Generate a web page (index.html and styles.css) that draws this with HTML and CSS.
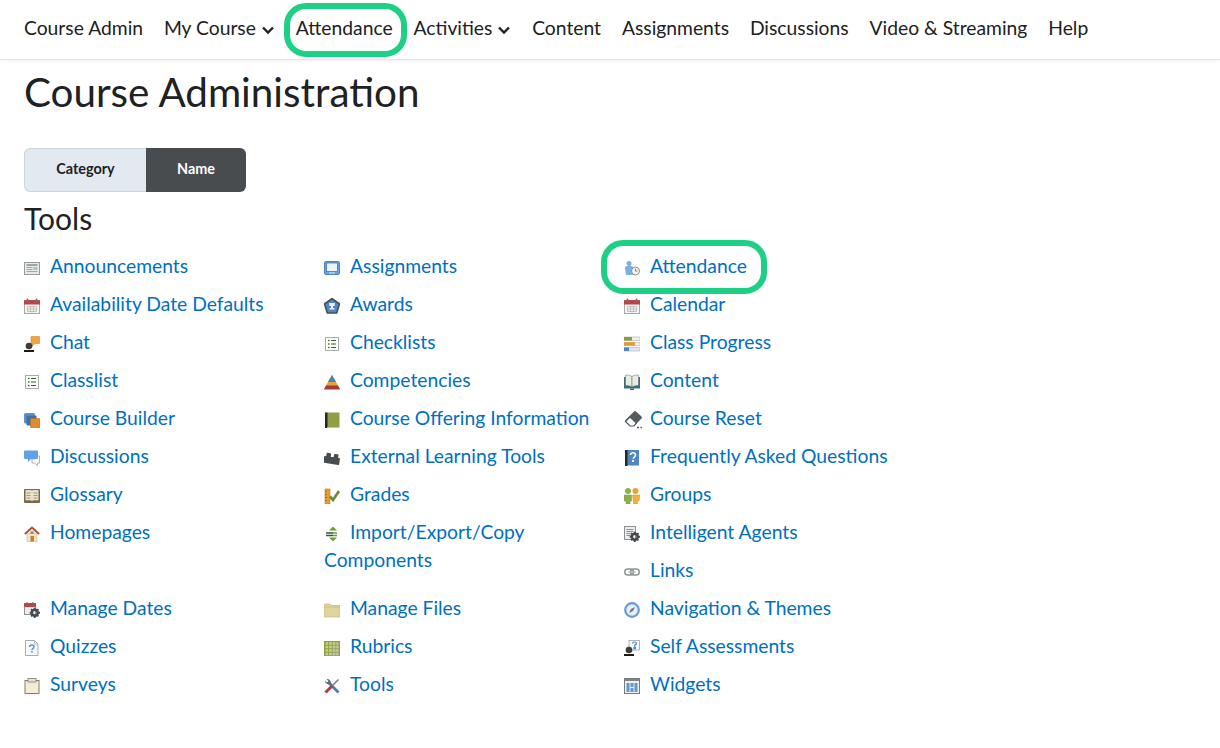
FILE: index.html
```html
<!DOCTYPE html>
<html lang="en">
<head>
  <meta charset="UTF-8">
  <title>Course Administration</title>
  <link rel="stylesheet" href="styles.css">
</head>
<body>
  <svg class="defs" width="0" height="0">
    <symbol id="i-list" viewBox="0 0 16 16"><rect x="1.500" y="1.500" width="13" height="13" fill="#fff" stroke="#a9adaa"/><path d="M4 4.500h1.500M4 8h1.500M4 11.500h1.500" stroke="#3f7a10" stroke-width="1.600"/><path d="M7 4.500h5M7 8h5M7 11.500h5" stroke="#3d5a30" stroke-width="1.100"/></symbol>
    <symbol id="i-cal" viewBox="0 0 16 16"><rect x=".5" y="2.500" width="15" height="13" fill="#f4f4f2" stroke="#a5a8a8"/><rect y="2" width="16" height="4.500" rx="1" fill="#b8454a"/><path d="M3.500 .5v3M12.500 .5v3" stroke="#777" stroke-width="1.600"/><path d="M3.500 8.500h9v5h-9zM6.500 8.500v5M9.500 8.500v5M3.500 11h9" fill="none" stroke="#b5b5b5" stroke-width=".8"/></symbol>
    <symbol id="i-gear" viewBox="0 0 10 10"><circle cx="5" cy="5" r="2.800" fill="none" stroke="#444b50" stroke-width="2.400"/><path d="M5 0v2M5 8v2M0 5h2M8 5h2M1.500 1.500l1.400 1.400M7.100 7.100l1.400 1.400M8.500 1.500L7.100 2.900M2.900 7.100L1.500 8.500" stroke="#444b50" stroke-width="1.800"/></symbol>
  </svg>

  <nav class="topnav">
    <a href="#">Course Admin</a>
    <a href="#">My Course <svg class="chevron" viewBox="0 0 14 9"><path d="M2 1.500l5 5 5-5" fill="none" stroke="#202122" stroke-width="2.400"/></svg></a>
    <a href="#" class="nav-marked">Attendance</a>
    <a href="#">Activities <svg class="chevron" viewBox="0 0 14 9"><path d="M2 1.500l5 5 5-5" fill="none" stroke="#202122" stroke-width="2.400"/></svg></a>
    <a href="#">Content</a>
    <a href="#">Assignments</a>
    <a href="#">Discussions</a>
    <a href="#">Video &amp; Streaming</a>
    <a href="#">Help</a>
  </nav>

  <main class="page">
    <h1>Course Administration</h1>

    <div class="toggle">
      <button class="toggle-btn">Category</button>
      <button class="toggle-btn active">Name</button>
    </div>

    <h2>Tools</h2>

    <ul class="tools">
      <li><a href="#"><svg class="icon" viewBox="0 0 16 16"><rect x=".5" y="2.500" width="15" height="12" fill="#e8eae8" stroke="#969c99"/><path d="M2.500 5h11" stroke="#868e8b" stroke-width="1.500"/><path d="M2.500 7.500h6M2.500 9.500h6M2.500 11.500h11" stroke="#a3a9a6"/><rect x="9.500" y="7" width="4" height="3" fill="#a5c2d6"/></svg>Announcements</a></li>
      <li><a href="#"><svg class="icon" viewBox="0 0 16 16"><rect x=".5" y="1.500" width="15" height="13" rx="1.500" fill="#6ba3e0" stroke="#4d85c0"/><rect x="2.500" y="3" width="11" height="8.500" fill="#eef2f5" stroke="#3f6c99" stroke-width=".7"/><path d="M5 13h6" stroke="#dbe7f2"/></svg>Assignments</a></li>
      <li class="tool-marked"><a href="#"><svg class="icon" viewBox="0 0 16 16"><circle cx="5" cy="3.500" r="2.500" fill="#7aaee4"/><path d="M1 8q0-2 2-2h4q2 0 2.500 2l-.5 7H2z" fill="#7aaee4"/><circle cx="11.500" cy="11" r="4" fill="#f2f3f2" stroke="#8b918f"/><path d="M11.500 8.800V11h2" fill="none" stroke="#666" stroke-width=".8"/></svg>Attendance</a></li>

      <li><a href="#"><svg class="icon"><use href="#i-cal"/></svg>Availability Date Defaults</a></li>
      <li><a href="#"><svg class="icon" viewBox="0 0 16 16"><path d="M8 .5l7.500 5.500-2.800 9H3.300L.5 6z" fill="#4f86c6" stroke="#4a4f52" stroke-width="1.600" stroke-linejoin="round"/><path d="M5 5h6l-.5 3H9v2h1.500v1.500h-5V10H7V8H5.500z" fill="#e8eef2"/></svg>Awards</a></li>
      <li><a href="#"><svg class="icon"><use href="#i-cal"/></svg>Calendar</a></li>

      <li><a href="#"><svg class="icon" viewBox="0 0 16 16"><path d="M7 .5h8.500v7H11L8 10.500l.5-3H7z" fill="#f0a541" stroke="#d68a2c" stroke-width=".6"/><circle cx="5" cy="10" r="3.300" fill="#3c3c3c"/><path d="M0 15h10" stroke="#000" stroke-width="1.800"/></svg>Chat</a></li>
      <li><a href="#"><svg class="icon"><use href="#i-list"/></svg>Checklists</a></li>
      <li><a href="#"><svg class="icon" viewBox="0 0 16 16"><rect y="1" width="16" height="3.500" fill="#f0f0ee" stroke="#b0b4b2" stroke-width=".6"/><rect y="1" width="8" height="3.500" fill="#7f9c3f"/><rect y="6.200" width="16" height="3.500" fill="#f0f0ee" stroke="#b0b4b2" stroke-width=".6"/><rect y="6.200" width="11" height="3.500" fill="#e59a33"/><rect y="11.500" width="16" height="3.500" fill="#dfe6ee" stroke="#b0b4b2" stroke-width=".6"/><rect y="11.500" width="5" height="3.500" fill="#4b86c6"/></svg>Class Progress</a></li>

      <li><a href="#"><svg class="icon"><use href="#i-list"/></svg>Classlist</a></li>
      <li><a href="#"><svg class="icon" viewBox="0 0 16 16"><path d="M8 1L0 15h16z" fill="#e0a83a"/><path d="M8 1L4 8h8z" fill="#4b82b8"/><path d="M2 11.500L0 15.500h16l-2-4z" fill="#a83a3a"/></svg>Competencies</a></li>
      <li><a href="#"><svg class="icon" viewBox="0 0 16 16"><rect y="3" width="16" height="11.500" fill="#3c6e78"/><path d="M6 14.500h4v1.500H6z" fill="#3c6e78"/><path d="M1.500 1c3 0 5 .5 6.500 1.500V13c-1.500-1-3.500-1.500-6.500-1.500z" fill="#e8ecdf" stroke="#596b6e" stroke-width=".5"/><path d="M14.500 1c-3 0-5 .5-6.500 1.500V13c1.500-1 3.500-1.500 6.500-1.500z" fill="#e8ecdf" stroke="#596b6e" stroke-width=".5"/></svg>Content</a></li>

      <li><a href="#"><svg class="icon" viewBox="0 0 16 16"><rect y="1" width="11" height="10.500" rx="1.500" fill="#5a93cc"/><rect x="2.500" y="3.500" width="10" height="10" rx="1" fill="#4070a5"/><rect x="6.500" y="6.500" width="9.500" height="9.500" rx="1" fill="#e08a32" stroke="#b86f22" stroke-width=".6"/></svg>Course Builder</a></li>
      <li><a href="#"><svg class="icon" viewBox="0 0 16 16"><rect x="2.500" y=".5" width="13" height="14.500" fill="#909e46"/><rect x="1" y=".5" width="2.500" height="15.500" fill="#262922"/><path d="M3.500 15.500h12" stroke="#c4c69c"/></svg>Course Offering Information</a></li>
      <li><a href="#"><svg class="icon icon-wide" viewBox="0 0 20 19"><path d="M1.500 10L10 1.500Q11 .5 12 1.500L17.500 6.500Q18.500 7.500 17.500 8.500L10 16H6L1.500 12Q.5 11 1.500 10z" fill="#555a5d"/><path d="M1.500 11.500L6 7l6.500 6-2.500 3H6z" fill="#fbfbfb" stroke="#555a5d" stroke-width="1.200"/><path d="M13 17.500h2M16.500 17.500h1.500" stroke="#555a5d" stroke-width="1.500"/></svg>Course Reset</a></li>

      <li><a href="#"><svg class="icon" viewBox="0 0 16 16"><path d="M10.500 6h5v7h-2v2.500l-3-2.500H8V9h2.500z" fill="#fff" stroke="#a7abaa" stroke-width=".9"/><path d="M1 .5h12q1 0 1 1V8q0 1-1 1H7l-3 3V9H1q-1 0-1-1V1.500q0-1 1-1z" fill="#5fa3e6"/></svg>Discussions</a></li>
      <li><a href="#"><svg class="icon" viewBox="0 0 16 16"><g transform="rotate(9 8 8)" fill="#484c50"><rect x="0" y="7" width="16" height="7" rx="1"/><rect x="2" y="3.500" width="4.500" height="5" rx="1"/><rect x="9.500" y="3.500" width="4.500" height="5" rx="1"/></g></svg>External Learning Tools</a></li>
      <li><a href="#"><svg class="icon" viewBox="0 0 16 16"><rect x="1.500" width="13.500" height="15.500" fill="#4c88c4"/><rect x="1" width="2.500" height="16" fill="#24282a"/><path d="M6.500 5q.2-2.200 2.500-2.200 2.600 0 2.500 2.300c0 2-2.200 2-2.200 3.700" fill="none" stroke="#fff" stroke-width="1.600"/><rect x="8" y="10" width="2" height="2" fill="#fff"/></svg>Frequently Asked Questions</a></li>

      <li><a href="#"><svg class="icon" viewBox="0 0 16 16"><rect y="1" width="16" height="14" rx="1" fill="#7d6746"/><path d="M1.500 2h5.500q1 0 1 1v10q-1-.7-2-.7H1.500zM14.500 2H9q-1 0-1 1v10q1-.7 2-.7h4.500z" fill="#e8e2cc"/><path d="M2.500 5h4M2.500 7.500h4M2.500 10h4M9.500 5h4M9.500 7.500h4M9.500 10h4" stroke="#a59a75"/></svg>Glossary</a></li>
      <li><a href="#"><svg class="icon" viewBox="0 0 16 16"><rect x="1" y="1" width="5" height="15" fill="#e69f2e" stroke="#bd7d1e" stroke-width=".6"/><path d="M1 3.500h2M1 6.500h2M1 9.500h2M1 12.500h2" stroke="#8c5f1a" stroke-width=".7"/><path d="M6 8.500l3 3.500 6-9" fill="none" stroke="#67913a" stroke-width="2.800"/></svg>Grades</a></li>
      <li><a href="#"><svg class="icon" viewBox="0 0 16 16"><circle cx="4" cy="3" r="3" fill="#8faf4c"/><circle cx="11.500" cy="3" r="3" fill="#e8a23a"/><path d="M0 7h7.500v6H6v3H2v-3H0z" fill="#8faf4c" stroke="#7c983f" stroke-width=".5"/><path d="M8.500 7H16l-1 6h-1.500v3h-4z" fill="#eeb13a" stroke="#d79a2a" stroke-width=".5"/></svg>Groups</a></li>

      <li><a href="#"><svg class="icon" viewBox="0 0 16 16"><rect x="3" y="7" width="10" height="8.500" fill="#efe4c5" stroke="#b9ab88" stroke-width=".5"/><path d="M8 3L3 7h10z" fill="#efe4c5"/><path d="M.8 8L8 1.500 15.200 8" fill="none" stroke="#a8503f" stroke-width="1.800"/><rect x="6.500" y="5.500" width="3" height="2.500" fill="#8c8874"/><rect x="6.500" y="10" width="3.500" height="5.500" fill="#c6812c"/></svg>Homepages</a></li>
      <li class="two-line"><a href="#"><svg class="icon" viewBox="0 0 16 16"><path d="M9 .5l4 4H5zM9 15.500l-4-4h8z" fill="#6f9a3c"/><path d="M2 7h7M2 9.500h7" stroke="#2f5c24" stroke-width="1.300"/><path d="M9 7h4M9 9.500h4" stroke="#6f9a3c" stroke-width="1.300"/></svg>Import/Export/Copy Components</a></li>
      <li><a href="#"><svg class="icon" viewBox="0 0 16 16"><rect x=".5" y=".5" width="11" height="13" fill="#eceeee" stroke="#8c9292"/><path d="M2.500 3.500h7M2.500 5.500h7M2.500 7.500h4M2.500 9.500h4" stroke="#8c9292"/><use href="#i-gear" x="5.500" y="5.500" width="10.500" height="10.500"/></svg>Intelligent Agents</a></li>

      <li class="empty"></li>
      <li><a href="#"><svg class="icon" viewBox="0 0 16 16"><rect x=".8" y="5" width="8.500" height="6" rx="3" fill="none" stroke="#8f9593" stroke-width="1.500"/><rect x="6.700" y="5" width="8.500" height="6" rx="3" fill="none" stroke="#8f9593" stroke-width="1.500"/><path d="M4.500 8h7" stroke="#b6bab8" stroke-width="1.500"/></svg>Links</a></li>

      <li><a href="#"><svg class="icon" viewBox="0 0 16 16"><rect x=".5" y="1.500" width="11" height="11" fill="#ececea" stroke="#8d9091"/><rect y="1" width="12" height="4" rx="1" fill="#b8454a"/><path d="M3 0v2.500M9 0v2.500" stroke="#777" stroke-width="1.200"/><use href="#i-gear" x="5.500" y="5.500" width="10.500" height="10.500"/></svg>Manage Dates</a></li>
      <li><a href="#"><svg class="icon" viewBox="0 0 16 16"><path d="M0 3.500l1-1.500h5l1 1.500h9V15H0z" fill="#e0d4a0" stroke="#c4b67e" stroke-width=".7"/><path d="M0 5h16" stroke="#c4b67e" stroke-width=".7"/></svg>Manage Files</a></li>
      <li><a href="#"><svg class="icon" viewBox="0 0 16 16"><circle cx="8" cy="8" r="6.800" fill="#e9eff5" stroke="#6a9cd4" stroke-width="2.200"/><path d="M11 5L9 9 5 11l2-4z" fill="#5e7a98"/></svg>Navigation &amp; Themes</a></li>

      <li><a href="#"><svg class="icon" viewBox="0 0 16 16"><path d="M1.500 .5h9l3.500 3.500v11.500H1.500z" fill="#f7f9fa" stroke="#a9adaf"/><path d="M10.500 .5V4H14" fill="none" stroke="#a9adaf" stroke-width=".8"/><path d="M5.500 7q0-2 2.300-2 2.300 0 2.200 1.800C10 8.400 8 8.300 8 10" fill="none" stroke="#5a96d2" stroke-width="1.500"/><rect x="7.200" y="11" width="1.600" height="1.600" fill="#5a96d2"/></svg>Quizzes</a></li>
      <li><a href="#"><svg class="icon" viewBox="0 0 16 16"><rect y="1" width="16" height="15" fill="#8e9f44"/><path d="M1.500 3.500h13M1.500 7h13" stroke="#c9d08a" stroke-width="2.400" stroke-dasharray="2.700 .9"/><path d="M1.500 10.500h13M1.500 14h13" stroke="#c9d08a" stroke-width="2.400" stroke-dasharray="2.700 .9"/><path d="M8.700 7h5.800M8.700 10.500h5.800M8.700 14h5.800" stroke="#bdbdb0" stroke-width="2.400" stroke-dasharray="2.700 .9"/></svg>Rubrics</a></li>
      <li><a href="#"><svg class="icon" viewBox="0 0 16 16"><rect x="5" y=".5" width="10.500" height="9.500" fill="#f6f8fa" stroke="#9ba0a3" stroke-width=".8"/><path d="M8.500 3.500q0-1.500 2-1.500t2 1.500q0 1.200-1.800 1.600v1.500M10 7.300h1.400v1.300H10z" fill="none" stroke="#4d8ac8" stroke-width="1.200"/><circle cx="5" cy="10" r="3.300" fill="#3c3c3c"/><path d="M0 15h10" stroke="#000" stroke-width="1.800"/></svg>Self Assessments</a></li>

      <li><a href="#"><svg class="icon" viewBox="0 0 16 16"><rect x="1" y="2.500" width="14" height="13" fill="#f2edd5" stroke="#8b7a5d"/><rect x="4" y=".5" width="8" height="3.500" fill="#dfe0dc" stroke="#7b7f7e" stroke-width=".8"/></svg>Surveys</a></li>
      <li><a href="#"><svg class="icon" viewBox="0 0 16 16"><path d="M5 5L14.500 14.500" stroke="#4a7fb0" stroke-width="2.800"/><path d="M1.200 2.600a3.200 3.200 0 0 0 4.400 3.400l1.500 1.500 1-1-1.500-1.500A3.200 3.200 0 0 0 2.600 1.200L4.500 3 3 4.500z" fill="#60686a"/><path d="M8 8L1.500 14.500" stroke="#b03a45" stroke-width="3"/><path d="M8 8L14.500 1.500" stroke="#7a8082" stroke-width="1.600"/></svg>Tools</a></li>
      <li><a href="#"><svg class="icon" viewBox="0 0 16 16"><rect x=".5" y=".5" width="15" height="15" fill="#f0f1f1" stroke="#767c7f"/><path d="M1 2h14" stroke="#7d8386" stroke-width="2"/><rect x="2.500" y="5" width="3" height="9" fill="#5f97d0"/><rect x="6.500" y="5" width="3" height="4" fill="#5f97d0"/><rect x="6.500" y="10" width="3" height="4" fill="#5f97d0"/><rect x="10.500" y="5" width="3" height="9" fill="#5f97d0"/></svg>Widgets</a></li>
    </ul>
  </main>
</body>
</html>
```

FILE: styles.css
```css
*,
*::after {
  box-sizing: border-box;
}

body {
  margin: 0;
  font-family: Lato, "Noto Sans", sans-serif;
  color: #202122;
  background: #fff;
  position: relative;
}

.defs {
  position: absolute;
}

/* top navigation */
.topnav {
  display: flex;
  align-items: center;
  gap: 20.9px;
  height: 60px;
  padding: 0 24px 5px;
  border-bottom: 1px solid #e6e6e6;
  box-shadow: 0 2px 2px #f6f6f6;
}

.topnav a {
  color: #202122;
  font-size: 19.3px;
  text-decoration: none;
  white-space: nowrap;
}

.chevron {
  width: 14px;
  height: 9px;
}

.nav-marked,
.tool-marked {
  position: relative;
}

.nav-marked::after,
.tool-marked::after {
  content: "";
  position: absolute;
  border: 6px solid #1ed086;
  border-radius: 22px;
  pointer-events: none;
}

.nav-marked::after {
  left: -12px;
  right: -14px;
  top: -13px;
  bottom: -18px;
}

/* page body */
.page {
  padding: 0 24px;
}

h1 {
  margin: 0;
  padding-top: 8px;
  font-size: 40.4px;
  font-weight: 400;
  line-height: 47px;
}

.toggle {
  display: flex;
  margin-top: 33px;
  width: 222px;
  height: 44px;
}

.toggle-btn {
  border: 1px solid #cdd5dc;
  border-right: none;
  border-radius: 6px 0 0 6px;
  background: #e3e9f1;
  color: #202122;
  font-family: inherit;
  font-size: 14.4px;
  font-weight: 700;
  width: 122px;
  padding: 0 0 3px;
}

.toggle-btn.active {
  border: none;
  border-radius: 0 6px 6px 0;
  background: #494c4e;
  color: #fff;
  width: 100px;
}

h2 {
  margin: 10px 0 0;
  font-size: 30px;
  font-weight: 400;
  line-height: 32px;
}

.tools {
  list-style: none;
  margin: 18px 0 0;
  padding: 0;
  display: grid;
  grid-template-columns: repeat(3, 300px);
  row-gap: 10px;
}

.tools li {
  font-size: 19.3px;
  line-height: 28px;
  padding-right: 20px;
}

.tools a {
  color: #006fbf;
  text-decoration: none;
}

.two-line {
  grid-row: span 2;
}

.icon {
  width: 16px;
  height: 16px;
  margin-right: 10px;
  vertical-align: -3px;
}

.icon-wide {
  width: 20px;
  height: 19px;
  margin-right: 6px;
  vertical-align: -4px;
}

.tool-marked::after {
  left: -23px;
  top: -12px;
  width: 166px;
  height: 54px;
}
```
